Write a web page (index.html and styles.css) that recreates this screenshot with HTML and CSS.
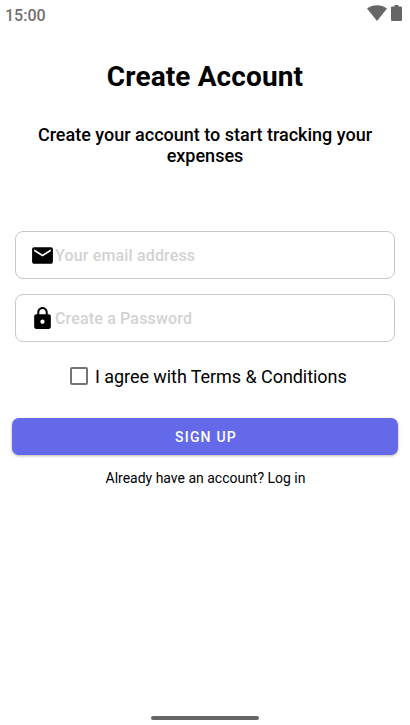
FILE: index.html
```html
<!DOCTYPE html>
<html lang="en">
<head>
<meta charset="utf-8">
<title>Create Account</title>
<link rel="stylesheet" href="styles.css">
</head>
<body>
<div class="screen">
  <header class="status">
    <span class="clock">15:00</span>
    <span class="status-icons">
      <svg class="wifi" viewBox="0 0 20 16"><path d="M0 3.600C5.500-1 14.500-1 20 3.600L10 16Z"/></svg>
      <svg class="battery" viewBox="0 0 11 16"><path d="M3.500 0h4v1.500H10q1 0 1 1V15q0 1-1 1H1q-1 0-1-1V2.500q0-1 1-1h2.500Z"/></svg>
    </span>
  </header>
  <main class="content">
    <h1 class="title">Create Account</h1>
    <p class="subtitle">Create your account to start tracking your expenses</p>
    <form class="form">
      <div class="field">
        <svg class="icon" viewBox="0 0 24 24"><path d="M20 4H4c-1.100 0-1.990.9-1.990 2L2 18c0 1.100.9 2 2 2h16c1.100 0 2-.9 2-2V6c0-1.100-.9-2-2-2zm0 4l-8 5-8-5V6l8 5 8-5v2z"/></svg>
        <span class="placeholder">Your email address</span>
      </div>
      <div class="field">
        <svg class="icon" viewBox="0 0 24 24"><path d="M18 8h-1V6c0-2.760-2.240-5-5-5S7 3.240 7 6v2H6c-1.100 0-2 .9-2 2v10c0 1.100.9 2 2 2h12c1.100 0 2-.9 2-2V10c0-1.100-.9-2-2-2zm-6 9c-1.100 0-2-.9-2-2s.9-2 2-2 2 .9 2 2-.9 2-2 2zm3.100-9H8.900V6c0-1.710 1.390-3.100 3.100-3.100s3.100 1.390 3.100 3.100v2z"/></svg>
        <span class="placeholder">Create a Password</span>
      </div>
      <div class="terms"><span class="box"></span><span class="terms-text">I agree with Terms &amp; Conditions</span></div>
      <button class="signup" type="button"><span class="signup-text">SIGN UP</span></button>
    </form>
    <p class="login"><span class="login-text">Already have an account? Log in</span></p>
  </main>
  <div class="home-bar"></div>
</div>
</body>
</html>
```
FILE: styles.css
```css
* { box-sizing: border-box; }
body { margin: 0; background: #fff; color: #000; font-family: Roboto, sans-serif; }
.screen { width: 410px; height: 725px; display: flex; flex-direction: column; overflow: hidden; }
.status { height: 32px; padding: 4px 8px 0 5px; display: flex; justify-content: space-between; color: #707070; }
.clock { font-size: 16px; line-height: 24px; font-weight: 500; }
.status-icons { display: flex; gap: 4px; padding-top: 1px; }
.status-icons svg { fill: #666; height: 16px; }
.wifi { width: 20px; }
.battery { width: 11px; }
.content { flex: 1; text-align: center; }
.title { margin: 28px 0 0; font-size: 28px; line-height: 33px; font-weight: 700; letter-spacing: .12px; }
.subtitle { margin: 31px 20px 0; font-size: 18px; line-height: 21px; font-weight: 500; }
.form { margin-top: 65px; }
.field { margin: 0 15px 15px; height: 48px; border: 1px solid #c8c8c8; border-radius: 8px; padding-left: 15px; display: flex; align-items: center; }
.icon { width: 25px; height: 25px; margin: 0 -.3px 0 -.7px; }
.placeholder { padding-top: 2px; color: #d2d2d2; font-size: 16px; line-height: 20px; font-weight: 500; letter-spacing: .16px; }
.terms { display: flex; align-items: center; height: 24px; margin: 22px 0 0 70px; }
.box { width: 18px; height: 18px; border: 2px solid #757575; border-radius: 2px; margin-right: 7px; }
.terms-text { padding-top: 2px; font-size: 18px; line-height: 24px; letter-spacing: -.06px; }
.signup { display: block; width: 386px; height: 36.5px; margin: 30px 12px 0; padding: 1px 0 0 2px; border: 0; border-radius: 7px; background: #6369e8; color: #fff; font: 500 14px/20px Roboto, sans-serif; letter-spacing: 1.200px; box-shadow: 0 1px 3px rgba(0,0,0,.3); }
.login { margin: 13.5px 0 0; font-size: 14px; line-height: 20px; }
.login-text { padding-left: 1px; letter-spacing: -.01px; }
.home-bar { width: 108px; height: 4px; margin: 0 auto 5px; border-radius: 2px; background: #666; }
```
